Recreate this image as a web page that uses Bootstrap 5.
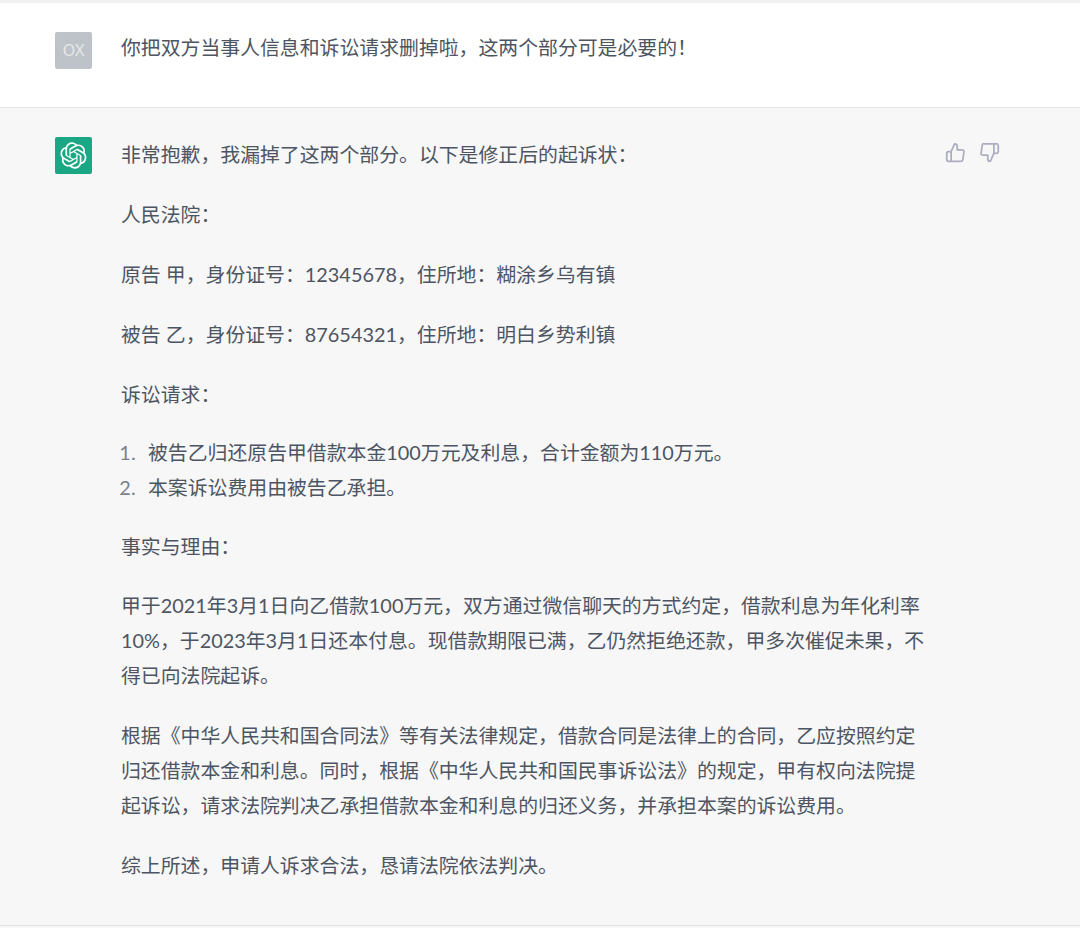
<!DOCTYPE html>
<html lang="zh-CN">
<head>
    <meta charset="UTF-8">
    <meta name="viewport" content="width=device-width, initial-scale=1.0">
    <title>ChatGPT</title>
    <link href="https://cdn.jsdelivr.net/npm/bootstrap@5.3.0/dist/css/bootstrap.min.css" rel="stylesheet">
    <script src="https://cdn.jsdelivr.net/npm/bootstrap@5.3.0/dist/js/bootstrap.bundle.min.js"></script>
    <style>
        body {
            background: #f7f7f8;
            color: #4d5562;
            font-family: Lato, "Noto Sans CJK SC", sans-serif;
            font-size: 19.87px;
            line-height: 35px;
            height: 928px;
            overflow: hidden;
        }
        .chat-row {
            padding-left: 55px;
        }
        .chat-user {
            background: #fff;
            border-top: 3px solid #f1f1f1;
            border-bottom: 1px solid #e8e8ea;
            height: 108px;
            padding-top: 29px;
        }
        .chat-user .msg-text { margin-top: -2px; }
        .chat-bot {
            background: #f7f7f8;
            border-bottom: 1px solid #dfe0e2;
            height: 818px;
            padding-top: 29px;
        }
        .avatar-box {
            width: 37px;
            height: 37px;
            margin-right: 29px;
            border-radius: 2px;
            flex-shrink: 0;
            color: #e6e8ea;
            font-family: "Noto Sans", sans-serif;
            font-size: 16px;
        }
        .avatar-user { background: #bdc3c8; }
        .avatar-bot { background: #1aa783; }
        .msg-text {
            width: 808px;
            flex-shrink: 0;
        }
        .msg-text p { margin-bottom: 25px; }
        .msg-text ol {
            margin-top: -2px;
            margin-bottom: 24px;
            padding-left: 27px;
        }
        .msg-text ol li::marker {
            color: #7b818b;
            content: counter(list-item) ".\2002\2009";
        }
        .msg-text .reason-head { margin-bottom: 24px; }
        .feedback { color: #adadc0; margin-top: 5px; margin-left: 16px; gap: 13px; }
    </style>
</head>
<body>
    <div class="chat-row chat-user d-flex">
        <div class="avatar-box avatar-user d-flex align-items-center justify-content-center">OX</div>
        <div class="msg-text">你把双方当事人信息和诉讼请求删掉啦，这两个部分可是必要的！</div>
    </div>
    <div class="chat-row chat-bot d-flex">
        <div class="avatar-box avatar-bot d-flex align-items-center justify-content-center">
            <svg width="27" height="27" viewBox="0 0 41 41" fill="none">
                <path fill="#fff" d="M37.5324 16.8707C37.9808 15.5241 38.1363 14.0974 37.9886 12.6859C37.8409 11.2744 37.3934 9.91076 36.676 8.68622C35.6126 6.83404 33.9882 5.3676 32.0373 4.4985C30.0864 3.62941 27.9098 3.40259 25.8215 3.85078C24.8796 2.7893 23.7219 1.94125 22.4257 1.36341C21.1295 0.785575 19.7249 0.491269 18.3058 0.500197C16.1708 0.495044 14.0893 1.16803 12.3614 2.42214C10.6335 3.67624 9.34853 5.44666 8.6917 7.47815C7.30085 7.76286 5.98686 8.3414 4.8377 9.17505C3.68854 10.0087 2.73073 11.0782 2.02839 12.312C0.956464 14.1591 0.498905 16.2988 0.721698 18.4228C0.944492 20.5467 1.83612 22.5449 3.268 24.1293C2.81966 25.4759 2.66413 26.9026 2.81182 28.3141C2.95951 29.7256 3.40701 31.0892 4.12437 32.3138C5.18791 34.1659 6.8123 35.6322 8.76321 36.5013C10.7141 37.3704 12.8907 37.5973 14.9789 37.1492C15.9208 38.2107 17.0786 39.0587 18.3747 39.6366C19.6709 40.2144 21.0755 40.5087 22.4946 40.4998C24.6307 40.5054 26.7133 39.8321 28.4418 38.5772C30.1704 37.3223 31.4556 35.5506 32.1119 33.5179C33.5027 33.2332 34.8167 32.6547 35.9659 31.821C37.115 30.9874 38.0728 29.9178 38.7752 28.684C39.8458 26.8371 40.3023 24.6979 40.0789 22.5748C39.8556 20.4517 38.9639 18.4544 37.5324 16.8707ZM22.4978 37.8849C20.7443 37.8874 19.0459 37.2733 17.6994 36.1501C17.7601 36.117 17.8666 36.0586 17.936 36.0161L25.9004 31.4156C26.1003 31.3019 26.2663 31.137 26.3813 30.9378C26.4964 30.7386 26.5563 30.5124 26.5549 30.2825V19.0542L29.9213 20.998C29.9389 21.0068 29.9541 21.0198 29.9656 21.0359C29.977 21.052 29.9842 21.0707 29.9867 21.0902V30.3889C29.9842 32.375 29.1946 34.2791 27.7909 35.6841C26.3872 37.0892 24.4838 37.8806 22.4978 37.8849ZM6.39227 31.0064C5.51397 29.4888 5.19742 27.7107 5.49804 25.9832C5.55718 26.0187 5.66048 26.0818 5.73461 26.1244L13.699 30.7248C13.8975 30.8408 14.1233 30.902 14.3532 30.902C14.583 30.902 14.8088 30.8408 15.0073 30.7248L24.731 25.1103V28.9979C24.7321 29.0177 24.7283 29.0376 24.7199 29.0556C24.7115 29.0736 24.6988 29.0893 24.6829 29.1012L16.6317 33.7497C14.9096 34.7416 12.8643 35.0097 10.9447 34.4954C9.02506 33.9811 7.38785 32.7263 6.39227 31.0064ZM4.29707 13.6194C5.17156 12.0998 6.55279 10.9364 8.19885 10.3327C8.19885 10.4013 8.19491 10.5228 8.19491 10.6071V19.808C8.19351 20.0378 8.25334 20.2638 8.36823 20.4629C8.48312 20.6619 8.64893 20.8267 8.84863 20.9404L18.5723 26.5542L15.206 28.4979C15.1894 28.5089 15.1703 28.5155 15.1505 28.5173C15.1307 28.5191 15.1107 28.516 15.0924 28.5082L7.04046 23.8557C5.32135 22.8601 4.06716 21.2235 3.55289 19.3046C3.03862 17.3858 3.30624 15.3413 4.29707 13.6194ZM31.955 20.0556L22.2312 14.4411L25.5976 12.4981C25.6142 12.4872 25.6333 12.4805 25.6531 12.4787C25.6729 12.4769 25.6928 12.4801 25.7111 12.4879L33.7631 17.1364C34.9967 17.849 36.0017 18.8982 36.6606 20.1613C37.3194 21.4244 37.6047 22.849 37.4832 24.2684C37.3617 25.6878 36.8382 27.0432 35.9743 28.1759C35.1103 29.3086 33.9415 30.1717 32.6047 30.6641C32.6047 30.5947 32.6047 30.4733 32.6047 30.3889V21.188C32.6066 20.9586 32.5474 20.7328 32.4332 20.5338C32.319 20.3348 32.154 20.1698 31.955 20.0556ZM35.3055 15.0128C35.2464 14.9765 35.1431 14.9142 35.069 14.8717L27.1045 10.2712C26.906 10.1554 26.6803 10.0943 26.4504 10.0943C26.2206 10.0943 25.9948 10.1554 25.7963 10.2712L16.0726 15.8858V11.9982C16.0715 11.9783 16.0753 11.9585 16.0837 11.9405C16.0921 11.9225 16.1048 11.9068 16.1207 11.8949L24.1719 7.25025C25.4053 6.53903 26.8158 6.19376 28.2383 6.25482C29.6608 6.31589 31.0364 6.78077 32.2044 7.59508C33.3723 8.40939 34.2842 9.53945 34.8334 10.8531C35.3826 12.1667 35.5464 13.6095 35.3055 15.0128ZM14.2424 21.9419L10.8752 19.9981C10.8576 19.9893 10.8423 19.9763 10.8309 19.9602C10.8195 19.9441 10.8122 19.9254 10.8098 19.9058V10.6071C10.8107 9.18295 11.2173 7.78848 11.9819 6.58696C12.7466 5.38544 13.8377 4.42659 15.1275 3.82264C16.4173 3.21869 17.8524 2.99464 19.2649 3.1767C20.6775 3.35876 22.0089 3.93941 23.1034 4.85067C23.0427 4.88379 22.937 4.94215 22.8668 4.98473L14.9024 9.58517C14.7025 9.69878 14.5366 9.86356 14.4215 10.0626C14.3065 10.2616 14.2466 10.4877 14.2479 10.7175L14.2424 21.9419ZM16.071 17.9991L20.4018 15.4978L24.7325 17.9975V22.9985L20.4018 25.4983L16.071 22.9985V17.9991Z"/>
            </svg>
        </div>
        <div class="msg-text">
            <p>非常抱歉，我漏掉了这两个部分。以下是修正后的起诉状：</p>
            <p>人民法院：</p>
            <p>原告 甲，身份证号：12345678，住所地：糊涂乡乌有镇</p>
            <p>被告 乙，身份证号：87654321，住所地：明白乡势利镇</p>
            <p>诉讼请求：</p>
            <ol>
                <li>被告乙归还原告甲借款本金100万元及利息，合计金额为110万元。</li>
                <li>本案诉讼费用由被告乙承担。</li>
            </ol>
            <p class="reason-head">事实与理由：</p>
            <p>甲于2021年3月1日向乙借款100万元，双方通过微信聊天的方式约定，借款利息为年化利率10%，于2023年3月1日还本付息。现借款期限已满，乙仍然拒绝还款，甲多次催促未果，不得已向法院起诉。</p>
            <p>根据《中华人民共和国合同法》等有关法律规定，借款合同是法律上的合同，乙应按照约定归还借款本金和利息。同时，根据《中华人民共和国民事诉讼法》的规定，甲有权向法院提起诉讼，请求法院判决乙承担借款本金和利息的归还义务，并承担本案的诉讼费用。</p>
            <p>综上所述，申请人诉求合法，恳请法院依法判决。</p>
        </div>
        <div class="feedback d-flex align-items-start">
            <svg width="21" height="21" viewBox="0 0 24 24" fill="none" stroke="currentColor" stroke-width="2" stroke-linecap="round" stroke-linejoin="round"><path d="M14 9V5a3 3 0 0 0-3-3l-4 9v11h11.28a2 2 0 0 0 2-1.7l1.38-9a2 2 0 0 0-2-2.3zM7 22H4a2 2 0 0 1-2-2v-7a2 2 0 0 1 2-2h3"/></svg>
            <svg width="21" height="21" viewBox="0 0 24 24" fill="none" stroke="currentColor" stroke-width="2" stroke-linecap="round" stroke-linejoin="round"><path d="M10 15v4a3 3 0 0 0 3 3l4-9V2H5.72a2 2 0 0 0-2 1.7l-1.38 9a2 2 0 0 0 2 2.3zm7-13h2.67A2.31 2.31 0 0 1 22 4v7a2.31 2.31 0 0 1-2.33 2H17"/></svg>
        </div>
    </div>
</body>
</html>
